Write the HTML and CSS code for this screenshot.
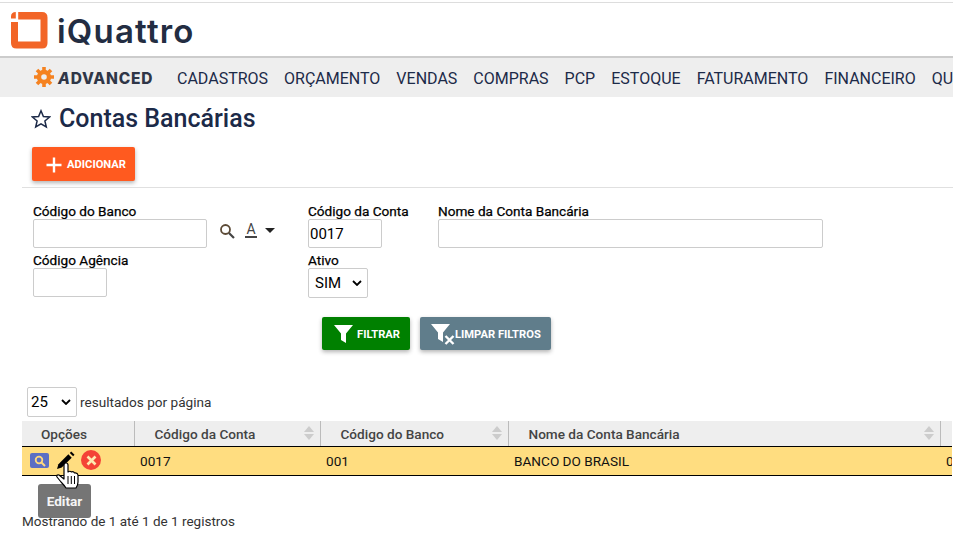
FILE: index.html
```html
<!DOCTYPE html>
<html lang="pt-BR">
<head>
<meta charset="utf-8">
<title>Contas Bancárias</title>
<link rel="stylesheet" href="styles.css">
</head>
<body>
<header class="topbar">
  <svg class="logo-mark" width="37" height="37" viewBox="0 0 37 37">
    <path fill="#f26527" d="M7.200 0H31Q36.500 0 36.500 5.500V31Q36.500 36.500 31 36.500H5.500Q0 36.500 0 31V10H7V29.500H29.500V7.500H7.200ZM4.800 0V6.500H0V4.500Q0 0 4.800 0Z"/>
  </svg>
  <span class="logo-text">iQuattro</span>
</header>
<nav class="nav">
  <svg class="gear" width="20" height="20" viewBox="0 0 20 20">
    <circle cx="10" cy="10" r="5" fill="none" stroke="#f58220" stroke-width="4.400"/>
    <path stroke="#f58220" stroke-width="3.600" d="M10 0V4M10 16V20M0 10H4M16 10H20M3 3L5.800 5.800M14.200 14.200L17 17M17 3L14.200 5.800M5.800 14.200L3 17"/>
  </svg>
  <span class="brand"><i>A</i>DVANCED</span>
  <ul class="menu">
    <li>CADASTROS</li>
    <li>ORÇAMENTO</li>
    <li>VENDAS</li>
    <li>COMPRAS</li>
    <li>PCP</li>
    <li>ESTOQUE</li>
    <li>FATURAMENTO</li>
    <li>FINANCEIRO</li>
    <li>QUALIDADE</li>
  </ul>
</nav>
<main class="page">
  <h1 class="title">
    <svg width="20" height="20" viewBox="0 0 20 20"><path fill="none" stroke="#1c2a48" stroke-width="1.500" d="M10 1.800L12.400 7.500L18.600 8L13.900 12L15.300 18L10 14.800L4.700 18L6.100 12L1.400 8L7.600 7.500Z"/></svg>
    Contas Bancárias
  </h1>
  <div class="actions">
    <button class="btn btn-add" type="button">
      <svg width="16" height="16" viewBox="0 0 16 16"><path stroke="#fff" stroke-width="2.400" d="M8 0.500V15.500M0.500 8H15.500"/></svg>
      ADICIONAR
    </button>
  </div>
  <form class="filters">
    <div class="col col-bank">
      <div class="field">
        <label>Código do Banco</label>
        <div class="bank-line">
          <input class="in in-bank" type="text">
          <svg class="search" width="16" height="16" viewBox="0 0 16 16"><circle cx="6.500" cy="6.500" r="4.500" fill="none" stroke="#5c4a36" stroke-width="1.800"/><path stroke="#444" stroke-width="2.200" d="M10 10L15 15"/></svg>
          <span class="letter">A</span>
          <span class="caret"></span>
        </div>
      </div>
      <div class="field">
        <label>Código Agência</label>
        <input class="in in-small" type="text">
      </div>
    </div>
    <div class="col col-account">
      <div class="field">
        <label>Código da Conta</label>
        <input class="in in-small" type="text" value="0017">
      </div>
      <div class="field">
        <label>Ativo</label>
        <select class="sel sel-active"><option>SIM</option></select>
      </div>
    </div>
    <div class="col">
      <div class="field">
        <label>Nome da Conta Bancária</label>
        <input class="in in-name" type="text">
      </div>
    </div>
  </form>
  <div class="filter-actions">
    <button class="btn btn-filter" type="button">
      <svg width="19" height="20" viewBox="0 0 19 20"><path fill="#fff" d="M0 1H19L12 9.500V19L7 16V9.500Z"/></svg>
      FILTRAR
    </button>
    <button class="btn btn-clear" type="button">
      <svg width="24" height="21" viewBox="0 0 24 21"><path fill="#fff" d="M0 0H19L12 8.500V18L7 15V8.500Z"/><path stroke="#fff" stroke-width="2.400" d="M14.500 12L22.500 20M22.500 12L14.500 20"/></svg>
      LIMPAR FILTROS
    </button>
  </div>
  <div class="page-size">
    <select class="sel sel-size"><option>25</option></select>
    <span>resultados por página</span>
  </div>
  <div class="table-wrap">
    <table class="grid">
      <colgroup><col class="c1"><col class="c2"><col class="c3"><col class="c4"><col class="c5"></colgroup>
      <thead>
        <tr>
          <th class="opt">Opções</th>
          <th class="sort">Código da Conta</th>
          <th class="sort">Código do Banco</th>
          <th class="sort">Nome da Conta Bancária</th>
          <th></th>
        </tr>
      </thead>
      <tbody>
        <tr>
          <td class="icons">
            <span class="ic-view"><svg width="12" height="12" viewBox="0 0 12 12"><circle cx="5" cy="5" r="3.300" fill="none" stroke="#ffd97d" stroke-width="1.800"/><path stroke="#ffd97d" stroke-width="2" d="M7.500 7.500L11 11"/></svg></span>
            <svg class="ic-edit" width="18" height="18" viewBox="0 0 19 19"><path fill="#000" d="M0 19L1.500 14L12 3.500L15.500 7L5 17.500Z"/><path fill="#000" d="M13.500 2L15 .5L18.500 4L17 5.500Z"/></svg>
            <span class="ic-del"><svg width="11" height="11" viewBox="0 0 11 11"><path stroke="#ffe9b0" stroke-width="2.600" d="M1.500 1.500L9.500 9.500M9.500 1.500L1.500 9.500"/></svg></span>
          </td>
          <td>0017</td>
          <td>001</td>
          <td>BANCO DO BRASIL</td>
          <td>0</td>
        </tr>
      </tbody>
    </table>
    <div class="tooltip">Editar</div>
    <svg class="hand" width="23" height="27" viewBox="0 0 23 27">
      <path fill="#fff" stroke="#000" stroke-width="1.200" stroke-linejoin="round" d="M8 3Q8 1 10 1Q12 1 12 3V10Q14 8.500 15.500 10Q17.500 9 18.500 11Q21.500 10.500 22 13V20Q22 23 20 26H10Q8 23 5 20L1 15Q0 12.500 3 13L8 17Z"/>
      <path stroke="#000" d="M12 14V22M15.300 14V22M18.500 14V22"/>
    </svg>
  </div>
  <p class="info">Mostrando de 1 até 1 de 1 registros</p>
</main>
</body>
</html>
```
FILE: styles.css
```css
* { box-sizing: border-box; }
html, body { margin: 0; height: 538px; width: 953px; overflow: hidden; background: #fff; }
body { font-family: Roboto, "Liberation Sans", sans-serif; color: #000; }

.topbar { margin-top: 2px; height: 56px; border-top: 1px solid #ddd; border-bottom: 2px solid #ccc; display: flex; align-items: flex-start; padding: 9px 0 0 11px; }
.logo-mark { flex: none; }
.logo-text { font-family: Inter, Lato, sans-serif; font-weight: 600; font-size: 33px; line-height: 38px; color: #232d42; margin-left: 9px; letter-spacing: 1.200px; }

.nav { height: 39px; background: #eee; display: flex; align-items: center; padding-left: 34px; overflow: hidden; white-space: nowrap; }
.gear { flex: none; margin-top: -1px; }
.brand { font-family: Inter, sans-serif; font-weight: 800; font-size: 15.500px; letter-spacing: .75px; color: #2f3647; margin-left: 4px; width: 119px; flex: none; padding-top: 2px; }
.menu { list-style: none; display: flex; gap: 16px; margin: 2px 0 0; padding: 0; font-size: 16px; color: #1c2a48; }

.page { padding: 0 0 0 22px; }
.title { margin: 8px 0 0 9px; height: 28px; display: flex; align-items: center; gap: 8px; font-size: 25px; font-weight: 500; line-height: 28px; color: #1c2a48; }

.actions { margin-top: 14px; padding: 0 0 6px 10px; border-bottom: 1px solid #e0e0e0; }
.btn { border: 0; border-radius: 2px; color: #fff; font-family: Roboto, sans-serif; font-weight: 700; font-size: 11.200px; display: inline-flex; align-items: center; box-shadow: 0 2px 4px rgba(0,0,0,.3); padding: 1px 0 0; }
.btn-add { width: 103px; height: 34px; background: #ff5a1f; padding-left: 14px; gap: 5px; }
.btn-filter { width: 88px; height: 33px; background: #008000; padding-left: 12px; gap: 4px; }
.btn-clear { width: 131px; height: 33px; background: #607d8b; padding-left: 11px; gap: 0; }

.filters { display: flex; padding: 16px 0 0 11px; }
.col { display: flex; flex-direction: column; }
.col-bank { width: 275px; }
.col-account { width: 130px; }
.field { display: flex; flex-direction: column; align-items: flex-start; height: 49px; }
label { font-size: 13.600px; line-height: 15px; color: #000; -webkit-text-stroke: .25px #000; }
.bank-line { display: flex; align-items: center; }
.in { height: 29px; border: 1px solid #ccc; border-radius: 2px; padding: 0 1px; font-family: Roboto, sans-serif; font-size: 15px; color: #000; background: #fff; }
.in-bank { width: 174px; }
.in-small { width: 74px; }
.in-name { width: 385px; }
.search { margin: -6px 0 0 12px; }
.letter { margin: -6px 0 0 10px; width: 12px; border-bottom: 2px solid #444; font-size: 14px; line-height: 13px; text-align: center; color: #444; }
.caret { margin: -6px 0 0 8px; border: 5px solid transparent; border-top-color: #222; border-bottom: 0; }
.sel { height: 30px; border: 1px solid #ccc; border-radius: 2px; font-family: Roboto, sans-serif; font-size: 15px; color: #000; appearance: none; background: #fff url("data:image/svg+xml,%3Csvg xmlns='http://www.w3.org/2000/svg' width='10' height='6'%3E%3Cpath d='M1 1L5 5L9 1' fill='none' stroke='%23000' stroke-width='1.800'/%3E%3C/svg%3E") no-repeat right 5px center; }
.sel-active { width: 60px; padding: 0 0 0 6px; }
.sel-size { width: 50px; padding: 0 0 0 3px; }

.filter-actions { display: flex; gap: 10px; padding: 15px 0 0 300px; }

.page-size { display: flex; align-items: center; gap: 3px; margin: 37px 0 0 5px; font-size: 13.600px; color: #333; height: 30px; }

.table-wrap { position: relative; margin-top: 4px; }
.grid { width: 930px; table-layout: fixed; border-collapse: collapse; font-size: 13.600px; }
.c1 { width: 112px; }
.c2 { width: 186px; }
.c3 { width: 188px; }
.c4 { width: 432px; }
.c5 { width: 12px; }
th { height: 25px; padding: 1px 0 0 20px; background: #eee; border-right: 1px solid #bbb; border-bottom: 1px solid #000; text-align: left; font-weight: 500; color: #444; font-size: 13.600px; position: relative; }
th.opt { padding-left: 19px; }
th:last-child { border-right: 0; }
.sort::before, .sort::after { content: ""; position: absolute; right: 6px; border: 5px solid transparent; }
.sort::before { top: 5px; border-top: 0; border-bottom: 6px solid #ccc; }
.sort::after { top: 13px; border-bottom: 0; border-top: 6px solid #ccc; }
td { height: 29px; padding: 0 0 0 6px; background: #ffdd80; border-bottom: 1px solid #000; color: #111; font-size: 13.600px; white-space: nowrap; overflow: hidden; }
td.icons { padding: 0 0 0 8px; }
.icons { font-size: 0; }
.icons > * { vertical-align: middle; }
.ic-view { display: inline-flex; align-items: center; justify-content: center; width: 19px; height: 15px; background: #5b6fc4; border-radius: 2px; }
.ic-edit { margin: -1px 0 0 8px; }
.ic-del { display: inline-flex; align-items: center; justify-content: center; width: 20px; height: 20px; border-radius: 50%; background: #f44336; margin-left: 6px; margin-top: -1px; }

.tooltip { position: absolute; left: 16px; top: 63px; width: 53px; height: 34px; border-radius: 3px; background: #757575; color: #f5f5f5; font-size: 13.600px; font-weight: 700; display: flex; align-items: center; justify-content: center; z-index: 2; }
.hand { position: absolute; left: 34px; top: 41px; z-index: 3; }

.info { margin: 37px 0 0 0; font-size: 13.500px; line-height: 16px; color: #333; }
```
